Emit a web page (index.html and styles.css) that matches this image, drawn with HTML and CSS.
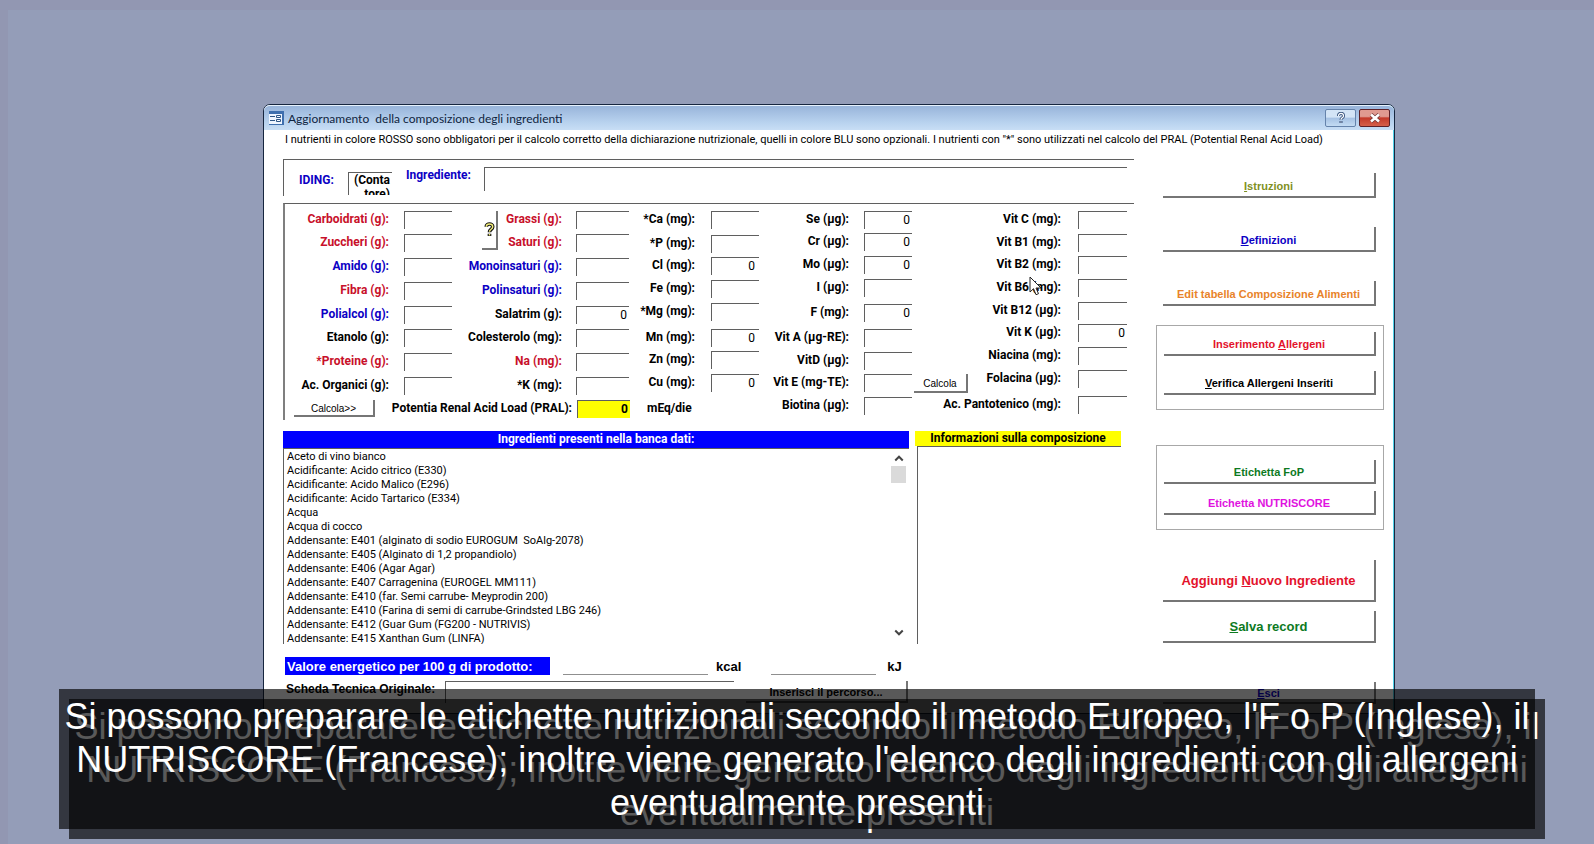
FILE: index.html
```html
<!DOCTYPE html>
<html lang="it">
<head>
<meta charset="utf-8">
<title>Aggiornamento della composizione degli ingredienti</title>
<link rel="stylesheet" href="styles.css">
</head>
<body>
<main class="desktop">
<section class="window">
  <header class="titlebar">
    <svg class="app-icon" viewBox="0 0 15 14" aria-hidden="true"><rect width="15" height="14" fill="#3f6fae"/><rect x="0" y="3" width="13" height="10" fill="#eef5ff"/><path d="M1 5.500h5M1 9.500h5M7.500 4.500h4v2h-4zM7.500 8.500h4v2h-4z" fill="none" stroke="#2f5686"/></svg>
    <h1 class="title">Aggiornamento&nbsp; della composizione degli ingredienti</h1>
    <button class="win-btn" aria-label="Guida"><svg viewBox="0 0 12 12"><path d="M3.500 4c0-3.500 5-3.500 5 0 0 2-2.500 1.500-2.500 3.700M6 9v2" fill="none" stroke="#35517c" stroke-width="3"/><path d="M3.500 4c0-3.500 5-3.500 5 0 0 2-2.500 1.500-2.500 3.700M6 9.400v1.200" fill="none" stroke="#fff" stroke-width="1.200"/></svg></button>
    <button class="win-btn close" aria-label="Chiudi"><svg viewBox="0 0 12 12"><path d="M2 2.500l8 7M10 2.500l-8 7" stroke="#6d3434" stroke-width="4"/><path d="M2 2.500l8 7M10 2.500l-8 7" stroke="#fff" stroke-width="2.600"/></svg></button>
  </header>
  <p class="note">I nutrienti in colore ROSSO sono obbligatori per il calcolo corretto della dichiarazione nutrizionale, quelli in colore BLU sono opzionali. I nutrienti con "*" sono utilizzati nel calcolo del PRAL (Potential Renal Acid Load)</p>
  <div class="content">
    <div class="form">
      <div class="identity">
        <label class="blue id-label" for="iding">IDING:</label>
        <textarea id="iding" class="id-box" readonly>(Conta tore)</textarea>
        <label class="blue name-label" for="ingr">Ingrediente:</label>
        <input id="ingr" class="name-box">
      </div>
      <div class="fields">
        <div class="left-block">
          <div class="groups">
            <div class="group g1">
              <label class="red" for="a1">Carboidrati (g):</label><input id="a1">
              <label class="red" for="a2">Zuccheri (g):</label><input id="a2">
              <label class="blue" for="a3">Amido (g):</label><input id="a3">
              <label class="red" for="a4">Fibra (g):</label><input id="a4">
              <label class="blue" for="a5">Polialcol (g):</label><input id="a5">
              <label for="a6">Etanolo (g):</label><input id="a6">
              <label class="red" for="a7">*Proteine (g):</label><input id="a7">
              <label for="a8">Ac. Organici (g):</label><input id="a8">
            </div>
            <div class="group g2">
              <button class="push ask" aria-label="Aiuto"><svg viewBox="0 0 12 16"><path d="M2.500 5C2.500 1 9.500 1 9.500 5 9.500 8 6 7.500 6 11M6 12.500v2.500" fill="none" stroke="#111" stroke-width="4"/><path d="M2.500 5C2.500 1 9.500 1 9.500 5 9.500 8 6 7.500 6 10.500M6 13v1.500" fill="none" stroke="#f1ec7a" stroke-width="1.600"/></svg></button>
              <label class="red" for="b1">Grassi (g):</label><input id="b1">
              <label class="red" for="b2">Saturi (g):</label><input id="b2">
              <label class="blue" for="b3">Monoinsaturi (g):</label><input id="b3">
              <label class="blue" for="b4">Polinsaturi (g):</label><input id="b4">
              <label for="b5">Salatrim (g):</label><input id="b5" value="0">
              <label for="b6">Colesterolo (mg):</label><input id="b6">
              <label class="red" for="b7">Na (mg):</label><input id="b7">
              <label for="b8">*K (mg):</label><input id="b8">
            </div>
            <div class="group g3">
              <label for="c1">*Ca (mg):</label><input id="c1">
              <label for="c2">*P (mg):</label><input id="c2">
              <label for="c3">Cl (mg):</label><input id="c3" value="0">
              <label for="c4">Fe (mg):</label><input id="c4">
              <label for="c5">*Mg (mg):</label><input id="c5">
              <label for="c6">Mn (mg):</label><input id="c6" value="0">
              <label for="c7">Zn (mg):</label><input id="c7">
              <label for="c8">Cu (mg):</label><input id="c8" value="0">
            </div>
          </div>
          <div class="pral">
            <button class="push small">Calcola&gt;&gt;</button>
            <label for="pral">Potentia Renal Acid Load (PRAL):</label>
            <input id="pral" class="pral-box" value="0">
            <span class="unit">mEq/die</span>
          </div>
        </div>
        <div class="group g4">
          <label for="d1">Se (µg):</label><input id="d1" value="0">
          <label for="d2">Cr (µg):</label><input id="d2" value="0">
          <label for="d3">Mo (µg):</label><input id="d3" value="0">
          <label for="d4">I (µg):</label><input id="d4">
          <label for="d5">F (mg):</label><input id="d5" value="0">
          <label for="d6">Vit A (µg-RE):</label><input id="d6">
          <label for="d7">VitD (µg):</label><input id="d7">
          <label for="d8">Vit E (mg-TE):</label><input id="d8">
          <label for="d9">Biotina (µg):</label><input id="d9">
        </div>
        <div class="group g5">
          <label for="e1">Vit C (mg):</label><input id="e1">
          <label for="e2">Vit B1 (mg):</label><input id="e2">
          <label for="e3">Vit B2 (mg):</label><input id="e3">
          <label for="e4">Vit B6 (mg):</label><input id="e4">
          <label for="e5">Vit B12 (µg):</label><input id="e5">
          <label for="e6">Vit K (µg):</label><input id="e6" value="0">
          <label for="e7">Niacina (mg):</label><input id="e7">
          <label for="e8">Folacina (µg):</label><input id="e8">
          <label for="e9">Ac. Pantotenico (mg):</label><input id="e9">
          <button class="push small calc">Calcola</button>
        </div>
      </div>
      <div class="lists">
        <section class="bank">
          <h2 class="bank-head">Ingredienti presenti nella banca dati:</h2>
          <div class="bank-body">
            <ul class="items">
              <li>Aceto di vino bianco</li>
              <li>Acidificante: Acido citrico (E330)</li>
              <li>Acidificante: Acido Malico (E296)</li>
              <li>Acidificante: Acido Tartarico (E334)</li>
              <li>Acqua</li>
              <li>Acqua di cocco</li>
              <li>Addensante: E401 (alginato di sodio EUROGUM&nbsp; SoAlg-2078)</li>
              <li>Addensante: E405 (Alginato di 1,2 propandiolo)</li>
              <li>Addensante: E406 (Agar Agar)</li>
              <li>Addensante: E407 Carragenina (EUROGEL MM111)</li>
              <li>Addensante: E410 (far. Semi carrube- Meyprodin 200)</li>
              <li>Addensante: E410 (Farina di semi di carrube-Grindsted LBG 246)</li>
              <li>Addensante: E412 (Guar Gum (FG200 - NUTRIVIS)</li>
              <li>Addensante: E415 Xanthan Gum (LINFA)</li>
            </ul>
            <div class="scroll">
              <button aria-label="Su"><svg viewBox="0 0 8 6"><path d="M1 5l3-3 3 3" fill="none" stroke="#444" stroke-width="1.600"/></svg></button>
              <span class="thumb"></span>
              <button class="down" aria-label="Giù"><svg viewBox="0 0 8 6"><path d="M1 1l3 3 3-3" fill="none" stroke="#444" stroke-width="1.600"/></svg></button>
            </div>
          </div>
        </section>
        <section class="info">
          <h2 class="info-head">Informazioni sulla composizione</h2>
          <div class="info-body"></div>
        </section>
      </div>
      <div class="energy">
        <span class="energy-label">Valore energetico per 100 g di prodotto:</span>
        <input id="kcal" class="line kcal"><label for="kcal">kcal</label>
        <input id="kj" class="line kj"><label for="kj">kJ</label>
      </div>
      <div class="sheet">
        <label for="sheet">Scheda Tecnica Originale:</label>
        <input id="sheet">
        <button class="push">Inserisci il percorso...</button>
      </div>
    </div>
    <nav class="side">
      <button class="push olive"><u>I</u>struzioni</button>
      <button class="push navy"><u>D</u>efinizioni</button>
      <button class="push orange">Edit tabella Composizione Alimenti</button>
      <div class="box allergens">
        <button class="push scarlet">Inserimento <u>A</u>llergeni</button>
        <button class="push"><u>V</u>erifica Allergeni Inseriti</button>
      </div>
      <div class="box labels">
        <button class="push green">Etichetta FoP</button>
        <button class="push magenta">Etichetta NUTRISCORE</button>
      </div>
      <button class="push big add scarlet">Aggiungi <u>N</u>uovo Ingrediente</button>
      <button class="push big save green"><u>S</u>alva record</button>
      <button class="push exit navy"><u>E</u>sci</button>
    </nav>
  </div>
  <svg class="cursor" viewBox="0 0 13 20" aria-hidden="true"><path d="M1 1v15l3.500-3.300 2.500 6 2.500-1-2.500-5.700H12z" fill="#fff" stroke="#222"/></svg>
</section>
</main>
<div class="caption echo" aria-hidden="true">Si possono preparare le etichette nutrizionali secondo il metodo Europeo, l'F o P (Inglese), il<br>NUTRISCORE (Francese); inoltre viene generato l'elenco degli ingredienti con gli allergeni<br>eventualmente presenti</div>
<div class="caption">Si possono preparare le etichette nutrizionali secondo il metodo Europeo, l'F o P (Inglese), il<br>NUTRISCORE (Francese); inoltre viene generato l'elenco degli ingredienti con gli allergeni<br>eventualmente presenti</div>
</body>
</html>
```
FILE: styles.css
```css
* { box-sizing: border-box; }

body {
  position: relative;
  min-height: 100vh;
  margin: 0;
  overflow: hidden;
  border-top: 10px solid #9297b2;
  border-left: 8px solid #9297b2;
  background: #949db8;
  color: #000;
  font: 11px/14px Roboto, "Liberation Sans", sans-serif;
}

h1, h2, p, ul { margin: 0; padding: 0; }
ul { list-style: none; }
input, textarea, button { margin: 0; padding: 0; border: 0; border-radius: 0; background: none; color: inherit; font: inherit; }
label, .unit { font-weight: 700; font-size: 12px; line-height: 16px; white-space: nowrap; }

.desktop { padding: 94px 199px 0 255px; }

.window {
  position: relative;
  border: 1px solid #17263f;
  border-radius: 7px 7px 0 0;
  background: #fff;
  box-shadow: inset -1px 0 #4fd0e8;
}

.titlebar {
  display: flex;
  align-items: center;
  gap: 3px;
  height: 25px;
  padding: 0 4px 0 5px;
  border-top: 1px solid #e6f1fc;
  border-radius: 6px 6px 0 0;
  background: linear-gradient(#98b4da, #b9d3ef 70%, #c8def5);
}
.app-icon { width: 15px; height: 14px; }
.title { flex: 1; padding: 2px 0 0 1px; color: #0f2440; font: 400 12px/18px Lato, "Open Sans", sans-serif; }
.win-btn {
  display: grid;
  place-items: center;
  width: 31px;
  height: 18px;
  border: 1px solid #6583ab;
  border-radius: 2px;
  background: linear-gradient(#d3e4f6 45%, #a5c1e3 50%, #c3dbf3);
}
.win-btn svg { width: 12px; height: 12px; }
.win-btn.close { border-color: #5c2028; background: linear-gradient(#e09a90 40%, #c43a2a 50%, #d5604a); }

.note { padding: 1px 0 0 21px; font-size: 11px; line-height: 18px; white-space: nowrap; }

.content {
  display: grid;
  grid-template-columns: 1fr 228px;
  column-gap: 22px;
  padding: 10px 10px 9px 19px;
}

/* Ingredient identity */
.identity {
  display: flex;
  align-items: flex-start;
  height: 37px;
  margin-bottom: 7px;
  padding: 7px 7px 0 15px;
  border-top: 1px solid #5f5f5f;
  border-left: 1px solid #5f5f5f;
}
.id-label { width: 49px; padding-top: 5px; }
.id-box {
  width: 44px;
  height: 23px;
  margin-top: 5px;
  padding-right: 2px;
  overflow: hidden;
  border-top: 1px solid #5f5f5f;
  border-left: 1px solid #5f5f5f;
  font-weight: 700;
  font-size: 12px;
  line-height: 14px;
  text-align: right;
  resize: none;
}
.name-label { width: 92px; padding-left: 14px; }
.name-box { flex: 1; height: 24px; border-top: 1px solid #5f5f5f; border-left: 1px solid #5f5f5f; }

/* Nutrient fields */
.fields {
  display: flex;
  justify-content: space-between;
  height: 217px;
  padding: 7px 7px 0 0;
  border-top: 1px solid #5f5f5f;
  border-left: 2px solid #7f7f7f;
}
.left-block { width: 474px; }
.groups { display: flex; }
.group { display: grid; align-content: start; align-items: start; }
.group label { text-align: right; }
.group input, .pral-box {
  height: 18px;
  padding: 0 2px 2px 0;
  border-top: 1px solid #5f5f5f;
  border-left: 1px solid #5f5f5f;
  font-size: 12px;
  line-height: 14px;
  text-align: right;
  min-width: 0;
  width: 100%;
}
.group :is(label, input):nth-of-type(1) { grid-row: 1; }
.group :is(label, input):nth-of-type(2) { grid-row: 2; }
.group :is(label, input):nth-of-type(3) { grid-row: 3; }
.group :is(label, input):nth-of-type(4) { grid-row: 4; }
.group :is(label, input):nth-of-type(5) { grid-row: 5; }
.group :is(label, input):nth-of-type(6) { grid-row: 6; }
.group :is(label, input):nth-of-type(7) { grid-row: 7; }
.group :is(label, input):nth-of-type(8) { grid-row: 8; }
.group :is(label, input):nth-of-type(9) { grid-row: 9; }
.g1 { grid-template: 23px 24px 24px 24px 23px 24px 24px 18px / 104px 48px; column-gap: 15px; }
.g2 { grid-template: 23px 24px 24px 24px 23px 24px 24px 18px / 30px 64px 67px; margin-left: 16px; }
.g2 label { grid-column: 1 / 3; }
.g2 input { grid-column: 3; width: 53px; justify-self: end; }
.g3 { grid-template: 24px 22px 23px 23px 26px 22px 23px 18px / 55px 48px; column-gap: 16px; margin-left: auto; }
.g3 input { padding-right: 4px; }
.g4 { grid-template: 22px 23px 23px 25px 25px 23px 22px 23px 18px / 82px 48px; column-gap: 15px; margin-left: 6px; }
.g5 { grid-template: 23px 22px 23px 23px 22px 23px 23px 26px 18px / 54px 93px 66px; }
.g5 label { grid-column: 1 / 3; }
.g5 input { grid-column: 3; width: 49px; justify-self: end; }

.push {
  padding-top: 2px;
  border-right: 2px solid #767676;
  border-bottom: 2px solid #767676;
  font: 700 11px/14px "Liberation Sans", Arial, sans-serif;
  text-align: center;
  white-space: nowrap;
}
.small { font-weight: 400; font-size: 10px; }
.ask { grid-area: 1 / 1 / 3 / 2; justify-self: center; width: 16px; height: 39px; margin-left: 14px; }
.ask svg { width: 11px; height: 15px; }
.calc { grid-area: 8 / 1; height: 19px; margin-top: 4px; }

.pral { display: grid; grid-template-columns: 81px 1fr 53px 129px; align-items: start; padding: 5px 0 0 9px; }
.pral .push { height: 17px; }
.pral label { padding-right: 5px; text-align: right; }
.pral-box { background: #ff0; font-weight: 700; }
.unit { padding-left: 17px; }

/* Lists */
.lists { display: grid; grid-template-columns: 1fr 206px; gap: 6px; height: 213px; margin: 11px 13px 13px 0; }
.bank, .info { display: flex; flex-direction: column; min-height: 0; }
.bank-head, .info-head { font-size: 12px; text-align: center; }
.bank-head { background: #00f; color: #fff; line-height: 17px; }
.bank-body { display: flex; flex: 1; min-height: 0; border-top: 1px solid #5f5f5f; border-left: 1px solid #5f5f5f; }
.items { flex: 1; padding: 1px 0 0 3px; overflow: hidden; }
.scroll { display: flex; flex-direction: column; width: 18px; padding: 3px 3px 3px 0; }
.scroll button { height: 14px; line-height: 10px; }
.scroll svg { width: 10px; height: 8px; }
.thumb { height: 17px; background: #dadada; }
.down { margin-top: auto; }
.info-head { background: #ff0; line-height: 15px; }
.info-body { flex: 1; margin-left: 2px; border-top: 1px solid #5f5f5f; border-left: 1px solid #5f5f5f; }

/* Energy and data sheet */
.energy { display: flex; align-items: center; height: 18px; margin: 0 13px 6px 2px; font-family: "Liberation Sans", Arial, sans-serif; }
.energy label { padding-top: 1px; font-size: 13px; }
.energy-label { width: 265px; padding: 1px 0 0 2px; background: #00f; color: #fff; font-size: 13px; font-weight: 700; line-height: 17px; white-space: nowrap; }
.line { height: 18px; border-bottom: 1px solid #8f8f8f; }
.kcal { width: 145px; margin: 0 8px 0 13px; }
.kj { width: 105px; margin: 0 11px 0 30px; }
.sheet { display: flex; align-items: flex-start; height: 22px; padding-left: 3px; }
.sheet label { width: 159px; font-family: "Liberation Sans", Arial, sans-serif; }
.sheet input { width: 289px; height: 22px; border-top: 1px solid #5f5f5f; border-left: 1px solid #5f5f5f; }
.sheet .push { width: 162px; height: 22px; margin-left: 12px; }

/* Side commands */
.side { display: flex; flex-direction: column; padding-top: 14px; }
.side > .push { height: 25px; margin: 0 8px 29px 7px; }
.box { display: flex; flex-direction: column; height: 85px; padding: 6px 7px 0; border: 1px solid #a8a8a8; }
.box .push { height: 24px; }
.allergens { margin: -10px 0 35px; gap: 15px; }
.labels { gap: 7px; margin-bottom: 30px; padding-top: 14px; }
.side > .big { font-size: 13px; }
.side > .add { height: 42px; margin-bottom: 9px; }
.side > .save { height: 32px; margin-bottom: 39px; }
.side > .exit { height: 22px; margin-bottom: 0; }

.red { color: #c8102a; }
.scarlet { color: #e3122b; }
.blue, .navy { color: #0c00c4; }
.olive { color: #7f9023; }
.orange { color: #e8832a; }
.green { color: #0d7a1f; }
.magenta { color: #e012e0; }

.cursor { position: absolute; top: 171px; left: 765px; width: 13px; height: 20px; }

/* Subtitles over the desktop */
.caption {
  position: absolute;
  right: 59px;
  bottom: 15px;
  left: 51px;
  height: 140px;
  padding-top: 6px;
  background: rgba(0, 0, 0, .65);
  color: #fff;
  font: 36px/43px "Liberation Sans", Arial, sans-serif;
  text-align: center;
  white-space: nowrap;
}
.echo { right: 49px; bottom: 5px; left: 61px; }
```
